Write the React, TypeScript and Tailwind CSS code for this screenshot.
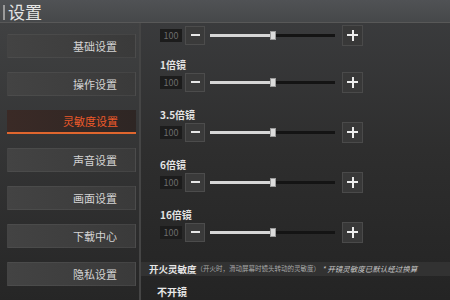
const font = { fontFamily: '"Noto Sans CJK SC", "Noto Sans", sans-serif' };

const menu = ['基础设置', '操作设置', '灵敏度设置', '声音设置', '画面设置', '下载中心', '隐私设置'];

function Stepper({ value }: { value: number }) {
  return (
    <div className="flex h-[22px] items-center">
      <div className="ml-[19px] flex h-[13px] w-[22px] items-center justify-center bg-[#1c1c1c] text-[9px] leading-none text-[#6c6c6c]">
        100
      </div>
      <div className="ml-[3px] flex h-[19px] w-[20px] items-center justify-center border border-[#4c4c4c] bg-[#3a3a3a]">
        <div className="h-[2px] w-[9px] bg-[#e6e6e6]" />
      </div>
      <div className="relative ml-[5px] flex h-[3px] w-[125px] bg-[#141414]">
        <div className="h-full bg-[#d6d6d6]" style={{ width: `${value}%` }} />
        <div
          className="absolute top-[-3px] h-[9px] w-[6px] -translate-x-1/2 border border-[#9a9a9a] bg-[#dcdcdc]"
          style={{ left: `${value}%` }}
        />
      </div>
      <div className="ml-[7px] flex h-[21px] w-[21px] items-center justify-center border border-[#4a4a4a] bg-[#383838]">
        <div className="relative h-[11px] w-[11px]">
          <div className="absolute left-0 top-[4.5px] h-[2px] w-[11px] bg-[#ececec]" />
          <div className="absolute left-[4.5px] top-0 h-[11px] w-[2px] bg-[#ececec]" />
        </div>
      </div>
    </div>
  );
}

function Row({ label }: { label: string }) {
  return (
    <div className="flex flex-col">
      <div className="ml-[19px] h-[12px] text-[10px] font-semibold leading-[12px] text-[#e4e4e4]">{label}</div>
      <Stepper value={50} />
    </div>
  );
}

export default function App() {
  return (
    <div className="flex h-[300px] w-[450px] flex-col overflow-hidden bg-gradient-to-b from-[#3c3d3f] via-[#2e2e2e] to-[#242424]" style={font}>
      <div className="flex h-[23px] shrink-0 items-end gap-[3px] border-b border-[#585858] bg-gradient-to-b from-[#505255] to-[#46484a] pb-[1px] pl-[3px]">
        <div className="mb-[1px] h-[15px] w-[2px] bg-[#9a9a9a]" />
        <span className="whitespace-nowrap text-[17px] leading-[19px] text-[#e4e4e4]">设置</span>
      </div>
      <div className="flex min-h-0 flex-1">
        <div className="flex w-[141px] shrink-0 flex-col gap-[14px] border-r-2 border-[#454545] bg-gradient-to-b from-[#404142] to-[#262626] pt-[11px]">
          {menu.map((m, i) =>
            i === 2 ? (
              <div key={m} className="ml-[7px] flex h-[24px] w-[129px] items-center justify-end border-b-2 border-[#e0662e] bg-gradient-to-r from-[#3a2a26] to-[#2e2624] pr-[18px] text-[11px] text-[#ee5a2a]">
                {m}
              </div>
            ) : (
              <div key={m} className="ml-[7px] flex h-[24px] w-[129px] items-center justify-end border border-white/5 bg-gradient-to-r from-[#434343] to-[#3a3a3a] pr-[18px] text-[11px] text-[#d4d4d4]">
                {m}
              </div>
            )
          )}
        </div>
        <div className="flex flex-1 flex-col pt-[1px]">
          <Stepper value={50} />
          <div className="mt-[13px] flex flex-col gap-[16px]">
            <Row label="1倍镜" />
            <Row label="3.5倍镜" />
            <Row label="6倍镜" />
            <Row label="16倍镜" />
          </div>
          <div className="mt-[19px] flex h-[14px] items-center whitespace-nowrap bg-[#323232] pl-[8px]">
            <span className="text-[9.5px] font-bold text-[#e6e6e6]">开火灵敏度</span>
            <span className="text-[6.5px] text-[#a8a8a8]">（开火时，滑动屏幕时镜头转动的灵敏度）</span>
            <span className="ml-[2px] text-[7.5px] italic text-[#c8c8c8]">* 开镜灵敏度已默认经过换算</span>
          </div>
          <div className="ml-[16px] mt-[10px] text-[10px] font-bold leading-[12px] text-[#e8e8e8]">不开镜</div>
        </div>
      </div>
    </div>
  );
}
